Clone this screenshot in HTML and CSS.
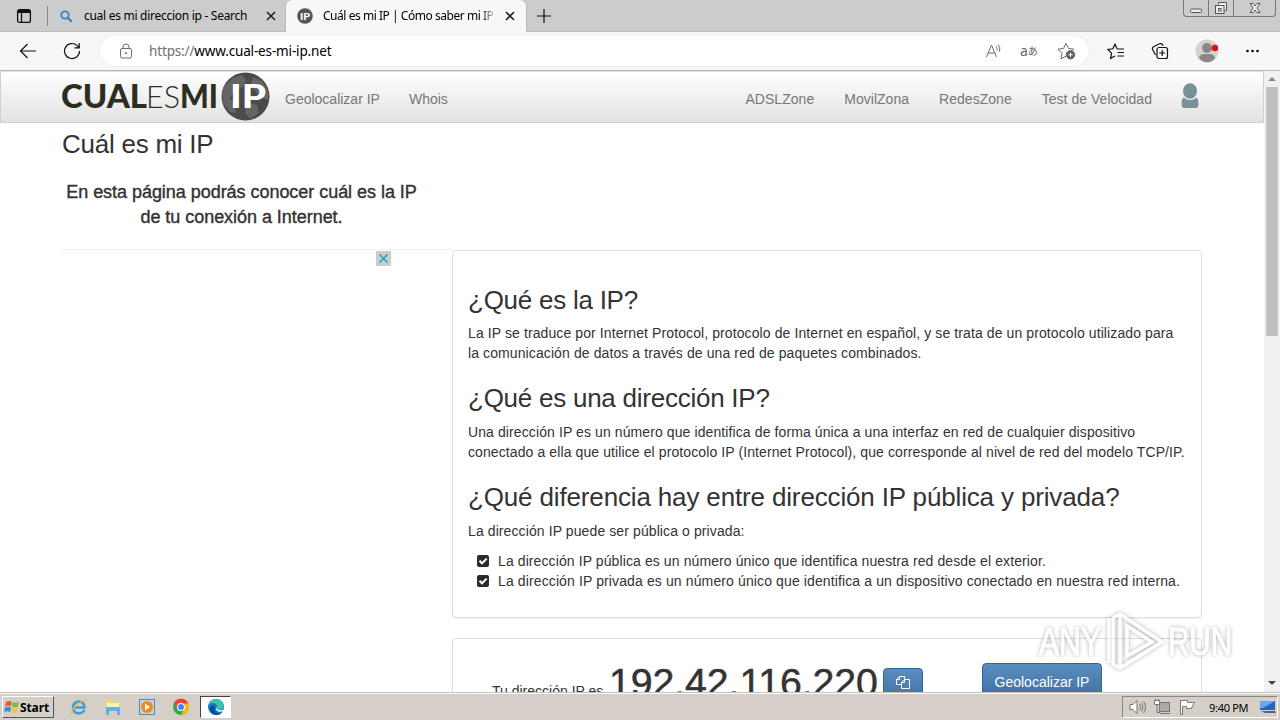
FILE: index.html
```html
<!DOCTYPE html>
<html lang="es">

<head>
    <meta charset="UTF-8">
    <title>Cuál es mi IP | Cómo saber mi IP</title>
    <link rel="stylesheet" href="styles.css">
</head>

<body>
    <div class="tabs">
        <svg class="tab-menu" width="16" height="16" viewBox="0 0 16 16" fill="none" stroke="#111" stroke-width="1.3"><rect x="1.6" y="1.6" width="12.8" height="12.8" rx="2"/><path d="M5.5 5v9" /><path d="M2 3.5h12" stroke-width="3"/></svg>
        <span class="tab-line"></span>
        <div class="tab">
            <svg class="tab-icon" width="16" height="16" viewBox="0 0 16 16" fill="none" stroke="#3d7fc4" stroke-width="1.8"><circle cx="7" cy="7" r="3.7"/><path d="M9.8 9.8l4 4" stroke-width="2.2"/></svg>
            <span class="tab-title first">cual es mi direccion ip - Search</span>
            <svg class="close" width="10" height="10" viewBox="0 0 10 10"><path d="M1 1l8 8M9 1l-8 8"/></svg>
        </div>
        <div class="tab active">
            <svg class="tab-icon" width="16" height="16" viewBox="0 0 16 16"><circle cx="8" cy="8" r="7.8" fill="#555"/><text x="3" y="12" class="mini-ip" textLength="10" lengthAdjust="spacingAndGlyphs">IP</text></svg>
            <span class="tab-title fade">Cuál es mi IP | Cómo saber mi IP</span>
            <svg class="close" width="10" height="10" viewBox="0 0 10 10"><path d="M1 1l8 8M9 1l-8 8"/></svg>
        </div>
        <svg class="new-tab" width="14" height="14" viewBox="0 0 14 14" stroke="#111" stroke-width="1.2"><path d="M7 0v14M0 7h14"/></svg>
        <div class="win-buttons">
            <span class="wb"><svg width="14" height="14" viewBox="0 0 14 14"><rect x="1.5" y="8" width="11" height="3.5" rx="1"/></svg></span>
            <span class="wb"><svg width="14" height="14" viewBox="0 0 14 14"><path d="M4.5 3.5v-2h8v8h-2"/><rect x="1.5" y="4.5" width="8.5" height="8" /><rect x="4.5" y="7.5" width="2.5" height="2.5"/></svg></span>
            <span class="wb wide"><svg width="14" height="14" viewBox="0 0 14 14"><path d="M2 2.500h3l2 2.500 2-2.500h3l-3 4.500 3 4.500h-3l-2-2.500-2 2.500H2l3-4.500z"/></svg></span>
        </div>
    </div>

    <div class="toolbar">
        <svg class="back" width="18" height="16" viewBox="0 0 18 16"><path d="M17 8H1.500M8.500 1L1.500 8l7 7"/></svg>
        <svg class="reload" width="18" height="18" viewBox="0 0 18 18"><path d="M16.500 9a7.500 7.500 0 1 1-2.300-5.400L16 5.500M16.200 1v4.800h-4.800"/></svg>
        <div class="address">
            <svg class="grey lock" width="14" height="16" viewBox="0 0 14 16"><rect x="1.500" y="5.500" width="11" height="9.500" rx="1.500"/><path d="M4 5.500V4a3 3 0 0 1 6 0v1.500"/><circle cx="7" cy="10.200" r=".7"/></svg>
            <span class="url"><span class="scheme">https://</span>www.cual-es-mi-ip.net</span>
            <svg class="grey read" width="18" height="16" viewBox="0 0 18 16"><path d="M1.500 14L6.500 2l5 12M3.200 10h6.600M11 3.500a4 4 0 0 1 1 4M13 1.500a7 7 0 0 1 1.500 7"/></svg>
            <span class="translate"><span>a</span><small>あ</small></span>
            <svg class="grey star" width="19" height="18" viewBox="0 0 19 18"><path d="M9 14.200l-5 2.600 1-5.600L1 7.200l5.500-.8L9 1.400l2.500 5 5.500.8-1.500 1.500"/><circle cx="13.500" cy="12.800" r="4.200" fill="#5c5c5c"/><path d="M13.500 10.500v4.600M11.200 12.800h4.600" stroke="#fff"/></svg>
        </div>
        <svg class="dark fav" width="18" height="17" viewBox="0 0 18 17"><path d="M10 5.800L8 1.200 5.800 5.800.9 6.500l3.600 3.600-.9 5.300L8 13M10 6h7M10.500 9.500H17M10.500 13H17"/></svg>
        <svg class="dark coll" width="18" height="18" viewBox="0 0 18 18"><path d="M4.500 13L1.600 7.500q-.8-2 1-2.800L8.500 1.800q2-.8 3 .8l.6 1.200"/><rect x="6" y="5.500" width="10.500" height="11" rx="2"/><path d="M11.200 8v6M8.200 11h6"/></svg>
        <svg class="avatar" width="26" height="24" viewBox="0 0 26 24"><circle cx="12" cy="12" r="11.500" fill="#d4d2d0"/><circle cx="12" cy="9" r="5" fill="#8a8886"/><path d="M4 19q1-4 5-4h6q4 0 5 4-3.500 4.300-8 4.300T4 19z" fill="#8a8886"/><circle cx="20" cy="9" r="3.200" fill="#d8121c"/></svg>
        <svg class="dots" width="14" height="4" viewBox="0 0 14 4"><circle cx="1.500" cy="2" r="1.300"/><circle cx="6.500" cy="2" r="1.300"/><circle cx="11.500" cy="2" r="1.300"/></svg>
    </div>

    <div class="viewport">
        <div class="page">
            <div class="navbar">
                <svg class="logo" width="208" height="50" viewBox="0 0 208 50">
                    <text class="heavy" x="-1" y="36.300" textLength="86" lengthAdjust="spacingAndGlyphs">CUAL</text>
                    <text class="thin" x="84" y="36.300" textLength="34" lengthAdjust="spacingAndGlyphs">ES</text>
                    <text class="heavy" x="118" y="36.300" textLength="38" lengthAdjust="spacingAndGlyphs">MI</text>
                    <circle cx="183.500" cy="24.500" r="24" fill="#4b4b4b"/>
                    <path d="M162 15l9-9 9-3 4 5-3 7-8 3-5 8 5 6 1 9-6-1-7-10-1-9zM191 5l9 4 6 10v9l-8-3-6-8-4-2zM185 30l10 3 2 8-9 6-5-6z" fill="#656565"/>
                    <text class="logo-ip" x="168" y="36.300" textLength="36" lengthAdjust="spacingAndGlyphs">IP</text>
                </svg>
                <a class="nav geo">Geolocalizar IP</a>
                <a class="nav whois">Whois</a>
                <div class="nav-right">
                    <a class="nav">ADSLZone</a>
                    <a class="nav">MovilZona</a>
                    <a class="nav">RedesZone</a>
                    <a class="nav">Test de Velocidad</a>
                </div>
                <svg class="user" width="18" height="26" viewBox="0 0 18 26" fill="#78909a"><ellipse cx="9" cy="8" rx="7" ry="7.700"/><path d="M2.500 14.500q6.500 5 13 0 1.800 1.500 1.800 5v2.500q0 3-3 3H3.700q-3 0-3-3v-2.500q0-3.500 1.800-5z"/></svg>
            </div>

            <div class="container">
                <h1>Cuál es mi IP</h1>
                <p class="intro">En esta página podrás conocer cuál es la IP<br>de tu conexión a Internet.</p>
                <div class="columns">
                    <div class="side">
                        <div class="ad-close"><svg width="15" height="15" viewBox="0 0 15 15"><path d="M3.500 3.500l8 8M11.500 3.500l-8 8"/></svg></div>
                    </div>
                    <div class="main">
                        <div class="panel">
                            <h2>¿Qué es la IP?</h2>
                            <p>La IP se traduce por Internet Protocol, protocolo de Internet en español, y se trata de un protocolo utilizado para<br>la comunicación de datos a través de una red de paquetes combinados.</p>
                            <h2>¿Qué es una dirección IP?</h2>
                            <p>Una dirección IP es un número que identifica de forma única a una interfaz en red de cualquier dispositivo<br>conectado a ella que utilice el protocolo IP (Internet Protocol), que corresponde al nivel de red del modelo TCP/IP.</p>
                            <h2 class="long">¿Qué diferencia hay entre dirección IP pública y privada?</h2>
                            <p>La dirección IP puede ser pública o privada:</p>
                            <ul>
                                <li><svg width="12" height="12" viewBox="0 0 12 12"><rect width="12" height="12" rx="2" fill="#2b2b2b"/><path d="M2.500 5.800l2.500 2.500 4.700-4.700" fill="none" stroke="#fff" stroke-width="2"/></svg>La dirección IP pública es un número único que identifica nuestra red desde el exterior.</li>
                                <li><svg width="12" height="12" viewBox="0 0 12 12"><rect width="12" height="12" rx="2" fill="#2b2b2b"/><path d="M2.500 5.800l2.500 2.500 4.700-4.700" fill="none" stroke="#fff" stroke-width="2"/></svg>La dirección IP privada es un número único que identifica a un dispositivo conectado en nuestra red interna.</li>
                            </ul>
                        </div>
                        <div class="panel ip-panel">
                            <span class="ip-label">Tu dirección IP es</span>
                            <span class="ip">192.42.116.220</span>
                            <a class="btn copy"><svg width="14" height="14" viewBox="0 0 14 14" fill="none" stroke="#fff"><path d="M5.500 9.500h-5v-5l3-3h5v3M.5 4.500h3v-3"/><path d="M5.500 7.500l3-3h5v9h-8zM5.500 7.500h3v-3"/></svg></a>
                            <a class="btn locate">Geolocalizar IP</a>
                        </div>
                    </div>
                </div>
            </div>
        </div>
        <div class="scrollbar">
            <span class="arrow up"></span>
            <span class="thumb"></span>
            <span class="arrow down"></span>
        </div>
    </div>

    <svg class="watermark" width="204" height="70" viewBox="0 0 204 70">
        <text x="5" y="49" textLength="62" lengthAdjust="spacingAndGlyphs">ANY</text>
        <path d="M75 12v45M86 8v54l42-26z M86 8l-7 4v46l7 4M93 20v30l25-14z"/>
        <text x="134" y="49" textLength="64" lengthAdjust="spacingAndGlyphs">RUN</text>
    </svg>

    <div class="taskbar">
        <div class="start">
            <svg width="16" height="16" viewBox="0 0 16 16"><path d="M2 3q3-2 6 0L7 7.500Q4 6 1 7.500z" fill="#e8622c"/><path d="M9 3q3 1.500 6 0l-1 4.500q-3 1.500-6 0z" fill="#7dbb3c"/><path d="M1 8.500q3-1.500 6 0L6 13q-3-1.500-6 0z" fill="#3b8ede"/><path d="M8 8.500q3 1.500 6 0L13 13q-3 1.500-6 0z" fill="#f4c52f"/></svg>
            <span>Start</span>
        </div>
        <div class="quick">
            <svg width="18" height="18" viewBox="0 0 18 18" fill="none"><path d="M14.500 12q-2 3.500-6 3.500-5.500-.5-5.500-6t6-6q5.500.5 5.500 6H5" stroke="#3aa0dc" stroke-width="2.500"/><path d="M2 16q-2-4 6-10t9-3" stroke="#e9b93c" stroke-width="1.200"/></svg>
            <svg width="18" height="18" viewBox="0 0 18 18"><path d="M2 1.500h6l1 2h7v10H2z" fill="#f0d67a"/><path d="M3 5h12v4H3z" fill="#fff3bb"/><path d="M2 17V9h14v8h-3v-4H5v4z" fill="#62b3dc"/></svg>
            <svg width="18" height="18" viewBox="0 0 18 18"><rect x="1.500" y="1.500" width="15" height="15" fill="#b9d6ee" stroke="#5a88b0"/><circle cx="9" cy="9" r="6" fill="#f28a1a"/><path d="M7 5.500v7l5-3.500z" fill="#fff"/></svg>
            <svg width="18" height="18" viewBox="0 0 18 18"><circle cx="9" cy="9" r="8" fill="#34a853"/><path d="M2 5A8 8 0 0 1 16.300 5.500L9 6l-3.500 4z" fill="#ea4335"/><path d="M16.300 5.500A8 8 0 0 1 9 17l3.500-6V5.500z" fill="#fbbc05"/><circle cx="9" cy="9" r="4" fill="#fff"/><circle cx="9" cy="9" r="3" fill="#4285f4"/></svg>
            <div class="running"><svg width="18" height="18" viewBox="0 0 18 18"><circle cx="9" cy="9" r="8" fill="#1479c9"/><path d="M1.500 7Q4 1 9 1q7.500.5 8 7-.5 4-5 4-3 0-2-3 0-4-4-4-3 0-4.500 2z" fill="#39c3a9"/><path d="M8 8q-3 5 3 7 3 1 5-2-2 4-7 4-6-1-6-6 0-4 5-3z" fill="#0c4a9c"/><path d="M10 9q-1 4 6 3l1 1q-7 2-8-2z" fill="#fff"/></svg></div>
        </div>
        <div class="tray">
            <svg width="17" height="16" viewBox="0 0 17 16"><path d="M1 5.500h3l4-4v13l-4-4H1z" fill="#fff"/><path d="M10.500 5q2 3 0 6M12.500 3.500q3 4.500 0 9M14.500 2q4 6 0 12" fill="none"/></svg>
            <svg width="17" height="16" viewBox="0 0 17 16"><rect x="5.500" y="3.500" width="10" height="9" fill="#aaa"/><path d="M.5 1.500h5v4h-5zM1.500 0v1.500M4.500 0v1.500" fill="#fff"/><path d="M3 6v7.500h3M6 14.500h10" fill="none"/></svg>
            <svg width="17" height="16" viewBox="0 0 17 16"><path d="M1.500 15.500V1.500h7v2h7l-2 3.500-1 2.500h-5v-2h-4v8z" fill="#fff"/></svg>
            <span class="clock">9:40 PM</span>
            <svg class="desk" width="16" height="14" viewBox="0 0 16 14"><path d="M0 1h15v9H0z" fill="#2464c8"/><path d="M0 1h15L3 8H0z" fill="#6da6ee"/><path d="M1 11h14l1 2H5z" fill="#4d6688"/></svg>
        </div>
    </div>
</body>

</html>
```
FILE: styles.css
```css
* {
    box-sizing: border-box;
}

body {
    margin: 0;
    width: 1280px;
    height: 720px;
    overflow: hidden;
    display: flex;
    flex-direction: column;
    font-family: "Liberation Sans", Arial, sans-serif;
    font-size: 14px;
    line-height: 20px;
    color: #333;
    background: #fff;
    white-space: nowrap;
}

svg {
    flex: none;
    display: block;
}

/* browser tabs */
.tabs {
    height: 32px;
    flex: none;
    display: flex;
    background: #ccc;
    border-bottom: 1px solid #bbb;
    font: 12px/16px "Noto Sans", sans-serif;
    color: #000;
}

.tab-menu {
    margin: 8px 0 0 16px;
}

.tab-line {
    width: 1px;
    height: 20px;
    margin: 6px 0 0 15px;
    background: #888;
}

.tab {
    display: flex;
    width: 238px;
    height: 31px;
    padding: 8px 0 0 10px;
}

.tab.active {
    width: 240px;
    height: 32px;
    background: #f7f7f7;
    border-radius: 6px 6px 0 0;
    padding-left: 11px;
    box-shadow: 0 0 2px #999;
    clip-path: inset(0 -3px 0 -3px);
}

.tab-title {
    margin-left: 10px;
    width: 172px;
    overflow: hidden;
    letter-spacing: -0.46px;
}

.tab-title.first {
    letter-spacing: -0.28px;
}

.fade {
    -webkit-mask-image: linear-gradient(90deg, #000 158px, transparent 174px);
}

.close {
    margin: 3px 0 0 10px;
    stroke: #222;
    stroke-width: 1.6;
}

.mini-ip {
    font: 900 10px Lato, sans-serif;
    fill: #fff;
}

.new-tab {
    margin: 9px 0 0 11px;
}

.win-buttons {
    display: flex;
    margin: 0 4px 0 auto;
    height: 17px;
    border: 1px solid #777;
    border-top: 0;
    border-radius: 0 0 4px 4px;
}

.wb {
    width: 25px;
    padding: 1px 0 0 5px;
    border-right: 1px solid #777;
}

.wb svg {
    fill: #eee;
    stroke: #555;
}

.wb.wide {
    width: 41px;
    padding-left: 14px;
    border: 0;
}

/* address bar */
.toolbar {
    height: 39px;
    flex: none;
    display: flex;
    align-items: center;
    background: #f7f7f7;
    border-bottom: 1px solid #b5b5b5;
}

.back,
.reload,
.dark {
    fill: none;
    stroke: #111;
    stroke-width: 1.2;
}

.back {
    margin-left: 19px;
}

.reload {
    margin-left: 26px;
}

.address {
    display: flex;
    align-items: center;
    width: 988px;
    height: 30px;
    margin-left: 19px;
    background: #fff;
    border-radius: 15px;
    box-shadow: 0 0 1px 1px #f0f0f0;
}

.grey {
    fill: none;
    stroke: #6b6b6b;
}

.lock {
    margin-left: 19px;
}

.url {
    margin-left: 16px;
    width: 836px;
    font: 13.5px/20px "Noto Sans", sans-serif;
    letter-spacing: -0.15px;
    color: #000;
}

.scheme {
    color: #707070;
}

.translate {
    width: 19px;
    margin-left: 17px;
    display: flex;
    align-items: center;
    font: 14px/16px "Noto Sans", "Noto Sans CJK JP", sans-serif;
    color: #666;
}

.translate small {
    font-size: 10px;
}

.star {
    margin-left: 18px;
}

.fav {
    margin-left: 19px;
}

.coll {
    margin-left: 26px;
}

.avatar {
    margin-left: 26px;
}

.dots {
    margin-left: 25px;
}

/* page */
.viewport {
    height: 621px;
    flex: none;
    display: flex;
    overflow: hidden;
}

.page {
    width: 1264px;
    height: 621px;
    overflow: hidden;
}

.navbar {
    height: 52px;
    display: flex;
    padding-left: 61px;
    border: 1px solid #d0d0d0;
    border-top-color: #e0e0e0;
    background: linear-gradient(#fff, #e2e2e2);
}

.logo text {
    font-family: Lato, sans-serif;
    font-size: 32px;
    fill: #2d2e22;
}

.logo .heavy {
    font-weight: 900;
}

.logo .thin {
    font-weight: 300;
}

.logo .logo-ip {
    font-weight: 900;
    fill: #fff;
}

.nav {
    color: #777;
    padding-top: 17px;
}

.geo {
    margin-left: 15px;
}

.whois {
    margin-left: 29px;
}

.nav-right {
    margin-left: auto;
    display: flex;
    gap: 30px;
    letter-spacing: 0.03px;
}

.user {
    margin: 11px 64px 0 29px;
}

.container {
    width: 1140px;
    margin-left: 62px;
    padding-top: 7px;
}

h1,
h2 {
    font-size: 26px;
    font-weight: 400;
    line-height: 1.1;
    margin: 21px 0 9px;
}

h1 {
    margin: 0 0 21.4px;
    letter-spacing: -0.25px;
}

.intro {
    width: 359px;
    height: 69px;
    margin: 0;
    font-size: 18px;
    line-height: 25px;
    letter-spacing: -0.04px;
    text-align: center;
    -webkit-text-stroke: 0.4px #333;
}

.columns {
    display: flex;
}

.side {
    width: 390px;
    border-top: 1px solid #eee;
}

.ad-close {
    width: 15px;
    margin: 1px 0 0 314px;
    background: #ccc;
}

.ad-close path {
    stroke: #1fa5bd;
    stroke-width: 1.5;
}

.main {
    width: 750px;
    padding-top: 1px;
}

.panel {
    height: 368px;
    border: 1px solid #ddd;
    border-radius: 4px;
    padding: 13.6px 15px 15px;
    margin-bottom: 20px;
    box-shadow: 0 1px 1px rgba(0, 0, 0, 0.05);
    letter-spacing: 0.1px;
}

.panel h2 {
    letter-spacing: -0.25px;
}

.panel h2.long {
    margin-bottom: 10px;
    letter-spacing: -0.15px;
}

.panel p {
    margin: 0 0 10px;
}

ul {
    list-style: none;
    margin: 0;
    padding: 0 0 0 9px;
}

li {
    display: flex;
    align-items: center;
    gap: 9px;
}

li:last-child {
    letter-spacing: 0.12px;
}

.ip-panel {
    display: flex;
    align-items: baseline;
    height: 120px;
    padding: 24.6px 0 0 39px;
}

.ip-label {
    width: 117px;
    letter-spacing: 0;
}

.ip {
    width: 274px;
    margin-top: -3px;
    font-size: 39.3px;
    line-height: 43px;
    letter-spacing: -0.1px;
    -webkit-text-stroke: 0.5px #333;
}

.btn {
    align-self: flex-start;
    height: 40px;
    border: 1px solid #2b669a;
    border-radius: 4px;
    background: linear-gradient(#5a8dc0, #3d6c9c);
    color: #fff;
    letter-spacing: 0;
}

.copy {
    width: 40px;
    margin-top: 4.4px;
    padding: 6px 0 0 12px;
}

.locate {
    width: 120px;
    margin: -0.6px 0 0 59px;
    padding-top: 8px;
    text-align: center;
}

.scrollbar {
    width: 16px;
    background: #f1f1f1;
    display: flex;
    flex-direction: column;
    align-items: center;
}

.arrow {
    border: 4px solid transparent;
}

.up {
    margin-top: 2px;
    border-bottom-color: #888;
}

.thumb {
    width: 12px;
    height: 249px;
    margin-top: 6px;
    background: #c1c1c1;
}

.down {
    margin: auto 0 3px;
    border-top-color: #444;
}

/* overlay mark */
.watermark {
    position: absolute;
    left: 1034px;
    top: 606px;
    filter: drop-shadow(0 0 2px rgba(0, 0, 0, 0.4));
    opacity: 0.75;
}

.watermark text {
    font: 400 39px "Liberation Sans", sans-serif;
    fill: #fff;
    stroke: #fff;
    stroke-width: 1;
}

.watermark path {
    fill: none;
    stroke: #fff;
    stroke-width: 3.5;
    stroke-linejoin: round;
}

/* taskbar */
.taskbar {
    position: relative;
    height: 28px;
    flex: none;
    display: flex;
    background: #d5cfc8;
    border-top: 1px solid #c4c0ba;
    box-shadow: inset 0 1px #fff;
}

.start {
    width: 52px;
    height: 22px;
    margin: 3px 0 0 2px;
    display: flex;
    align-items: center;
    border: 1px solid;
    border-color: #fff #555 #555 #fff;
    font: 700 12px "Noto Sans", sans-serif;
    letter-spacing: -0.1px;
    color: #000;
    padding-left: 1px;
}

.quick {
    display: flex;
    align-items: center;
    gap: 16px;
    padding-left: 16px;
}

.running {
    width: 31px;
    height: 22px;
    margin-left: -6px;
    padding: 1px 0 0 6px;
    background: #fff;
    border: 1px solid;
    border-color: #444 #fff #fff #444;
}

.tray {
    margin: 3px 2px 2px auto;
    width: 156px;
    display: flex;
    align-items: center;
    padding-left: 6px;
    gap: 8px;
    border: 1px solid;
    border-color: #888 #fff #fff #888;
}

.tray svg {
    stroke: #777;
}

.clock {
    width: 40px;
    margin-left: 5px;
    font: 11px "Noto Sans", sans-serif;
    letter-spacing: -0.3px;
    color: #000;
}

.tray .desk {
    stroke: none;
    margin-left: 3px;
}
```
